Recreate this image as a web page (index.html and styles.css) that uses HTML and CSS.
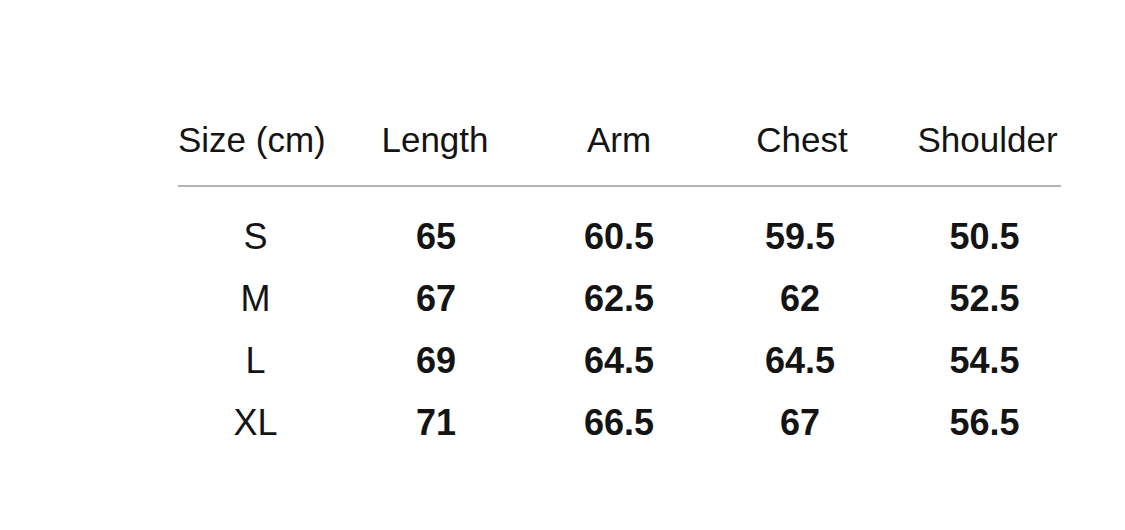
FILE: index.html
```html
<!DOCTYPE html>
<html>
<head>
<meta charset="utf-8">
<link rel="stylesheet" href="styles.css">
</head>
<body>
<div class="chart">
  <div class="row head">
    <div class="cell">Size (cm)</div>
    <div class="cell">Length</div>
    <div class="cell">Arm</div>
    <div class="cell">Chest</div>
    <div class="cell">Shoulder</div>
  </div>
  <div class="rule"></div>
  <div class="body">
    <div class="row data">
      <div class="cell size">S</div><div class="cell">65</div><div class="cell">60.5</div><div class="cell">59.5</div><div class="cell">50.5</div>
    </div>
    <div class="row data">
      <div class="cell size">M</div><div class="cell">67</div><div class="cell">62.5</div><div class="cell">62</div><div class="cell">52.5</div>
    </div>
    <div class="row data">
      <div class="cell size">L</div><div class="cell">69</div><div class="cell">64.5</div><div class="cell">64.5</div><div class="cell">54.5</div>
    </div>
    <div class="row data">
      <div class="cell size">XL</div><div class="cell">71</div><div class="cell">66.5</div><div class="cell">67</div><div class="cell">56.5</div>
    </div>
  </div>
</div>
</body>
</html>
```
FILE: styles.css
```css
html, body {
  margin: 0;
  padding: 0;
  background: #ffffff;
}
body {
  width: 1125px;
  height: 530px;
  overflow: hidden;
  font-family: "Liberation Sans", Arial, Helvetica, sans-serif;
  color: #141414;
}
.chart {
  padding-top: 120px;
  padding-left: 178px;
  width: 883px;
}
.row {
  display: grid;
  grid-template-columns: 146px 224px 142px 224px 147px;
}
.cell {
  text-align: center;
  white-space: nowrap;
}
.head {
  font-size: 35px;
  line-height: 40px;
}
.head .cell:nth-child(2) {
  padding-right: 2px;
}
.rule {
  height: 2px;
  background: #b4b4b4;
  margin-top: 25px;
}
.body {
  margin-top: 19px;
}
.data {
  font-size: 36px;
  line-height: 62px;
  font-weight: bold;
}
.data .size {
  font-weight: normal;
  padding-left: 9px;
}
.data .cell:nth-child(4) {
  padding-right: 4px;
}
.data .cell:nth-child(5) {
  padding-right: 6px;
}
```
